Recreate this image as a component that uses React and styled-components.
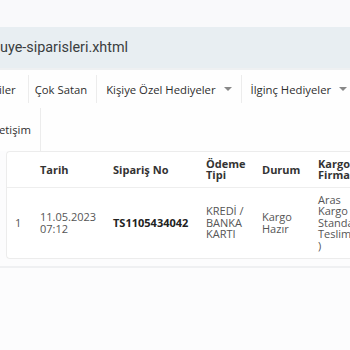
import React from 'react';
import styled, { createGlobalStyle } from 'styled-components';

const GlobalStyle = createGlobalStyle`
  html, body {
    margin: 0;
    padding: 0;
    background: #fcfcfd;
    overflow: hidden;
  }
`;

const Page = styled.div`
  width: 350px;
  height: 350px;
  overflow: hidden;
  font-family: 'Open Sans', sans-serif;
  color: #333;
`;

const TopStrip = styled.div`
  height: 27px;
  background: #f9f9fb;
`;

const UrlBar = styled.div`
  height: 41px;
  background: #e8eef2;
  display: flex;
  align-items: center;
  font-family: Roboto, sans-serif;
  font-size: 14.4px;
  color: #3a3d40;
  white-space: nowrap;
`;

const NavRow = styled.div`
  display: flex;
  align-items: center;
  height: ${p => p.$h}px;
  background: #fefefe;
  border-top: ${p => (p.$top ? '2px solid #eef0f2' : 'none')};
  white-space: nowrap;
`;

const NavItem = styled.div`
  display: flex;
  align-items: center;
  gap: 8px;
  height: ${p => p.$ih || 28}px;
  padding: 0 ${p => p.$pr}px 0 ${p => p.$pl}px;
  border-left: ${p => (p.$sep ? '1px solid #ececec' : 'none')};
  border-right: ${p => (p.$sepR ? '1px solid #ececec' : 'none')};
  font-size: 11.3px;
  color: #2e2e2e;
  margin-left: ${p => p.$ml || 0}px;
`;

const Caret = styled.span`
  width: 0;
  height: 0;
  border-left: 4px solid transparent;
  border-right: 4px solid transparent;
  border-top: 4.5px solid #888;
`;

const Card = styled.div`
  margin-left: 6px;
  width: 400px;
  border: 1px solid #ececec;
  border-right: none;
  border-radius: 4px 0 0 4px;
  background: #fff;
`;

const Table = styled.table`
  border-collapse: collapse;
  table-layout: fixed;
  width: 345px;
`;

const Th = styled.th`
  box-sizing: border-box;
  width: ${p => p.$w}px;
  text-align: left;
  font-weight: 700;
  font-size: 11px;
  line-height: 11.5px;
  color: #333;
  padding: 0 0 0 8px;
  height: 35px;
  vertical-align: middle;
  border-bottom: 1px solid #eeeeee;
`;

const Td = styled.td`
  font-size: 11px;
  line-height: 11.4px;
  color: #555;
  padding: 0 0 0 8px;
  height: 70px;
  vertical-align: middle;
  font-weight: ${p => (p.$bold ? 700 : 400)};
  ${p => p.$bold && 'color: #222;'}
`;

const FooterLine = styled.div`
  margin-top: 7px;
  height: 2px;
  background: #eff0f2;
`;

export default function App() {
  return (
    <Page>
      <GlobalStyle />
      <TopStrip />
      <UrlBar>uye-siparisleri.xhtml</UrlBar>
      <NavRow $h={38} $top>
        <NavItem $pl={0} $pr={12} $ml={-1}>iler</NavItem>
        <NavItem $sep $pl={6} $pr={9}>Çok Satan</NavItem>
        <NavItem $sep $pl={9} $pr={9}>Kişiye Özel Hediyeler <Caret /></NavItem>
        <NavItem $sep $pl={9} $pr={9}>İlginç Hediyeler <Caret /></NavItem>
      </NavRow>
      <NavRow $h={43}>
        <NavItem $pl={0} $pr={9} $ml={-1} $ih={43} $sepR>etişim</NavItem>
      </NavRow>
      <Card>
        <Table>
          <thead>
            <tr>
              <Th $w={25}></Th>
              <Th $w={73}>Tarih</Th>
              <Th $w={93}>Sipariş No</Th>
              <Th $w={56}>Ödeme Tipi</Th>
              <Th $w={56}>Durum</Th>
              <Th $w={42}>Kargo Firması</Th>
            </tr>
          </thead>
          <tbody>
            <tr>
              <Td>1</Td>
              <Td>11.05.2023 07:12</Td>
              <Td $bold>TS1105434042</Td>
              <Td>KREDİ / BANKA KARTI</Td>
              <Td>Kargo Hazır</Td>
              <Td>Aras Kargo Standart Teslim )</Td>
            </tr>
          </tbody>
        </Table>
      </Card>
      <FooterLine />
    </Page>
  );
}
